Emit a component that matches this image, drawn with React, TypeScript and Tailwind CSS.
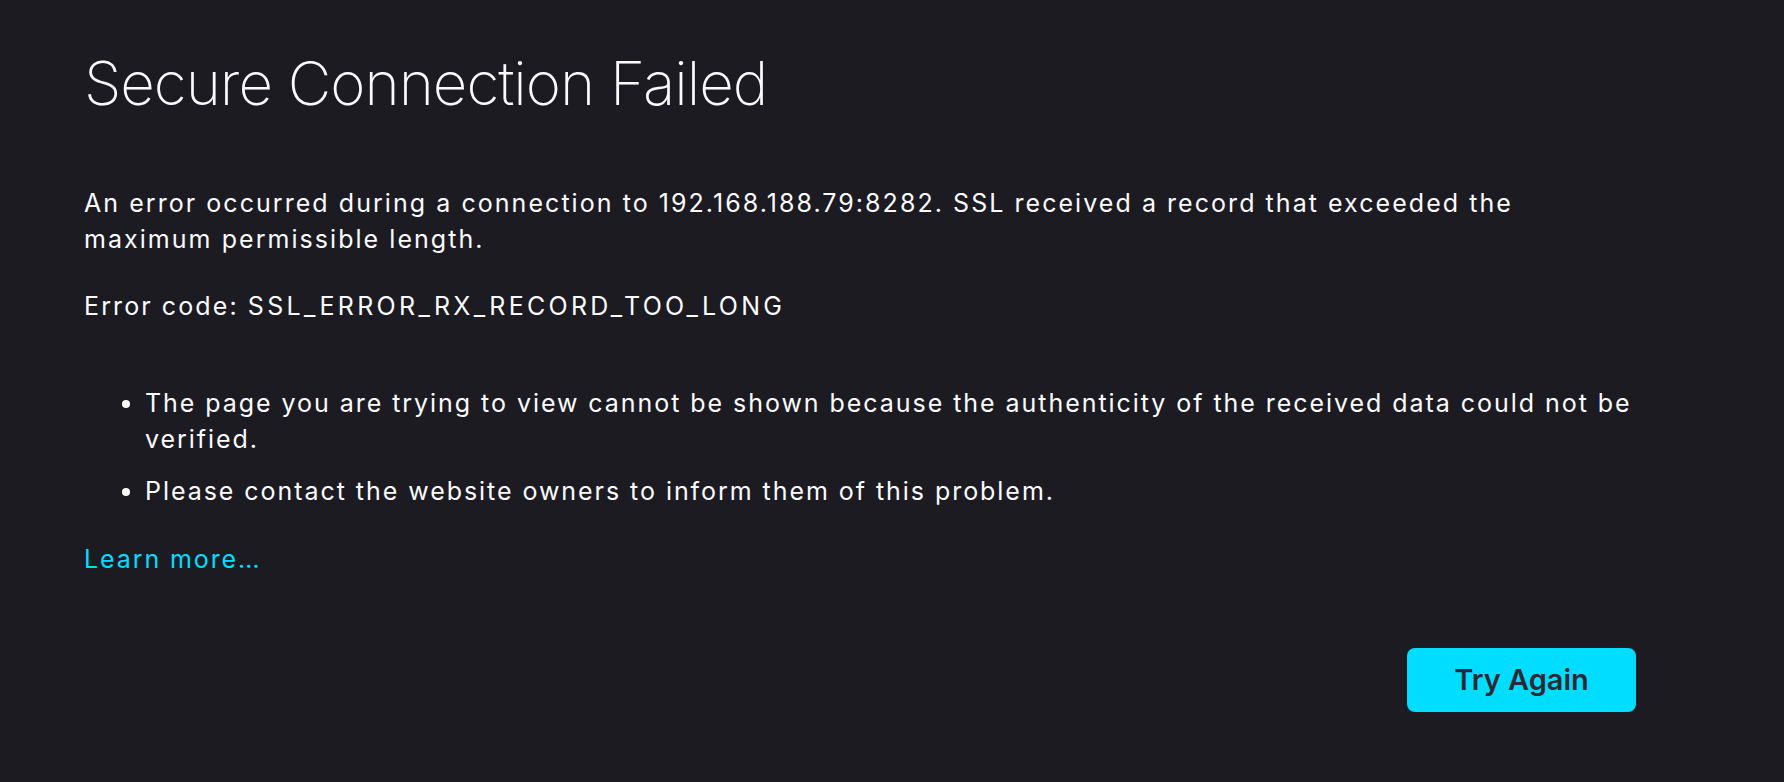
import React from "react";

export default function App() {
  return (
    <div
      className="min-h-screen w-full bg-[#1c1b22] text-[#fbfbfe] pl-[84px] pt-[47px]"
      style={{ fontFamily: "Inter, 'Noto Sans', sans-serif" }}
    >
      <div className="w-[1552px] flex flex-col">
        <h1 className="text-[60px] leading-[72px] font-extralight tracking-[-1px]">
          Secure Connection Failed
        </h1>

        <p className="mt-[66px] text-[25px] leading-[36px] tracking-[2.05px]">
          An error occurred during a connection to 192.168.188.79:8282. SSL received a record that exceeded the
          <br />
          maximum permissible length.
        </p>

        <p className="mt-[31px] text-[25px] leading-[36px] tracking-[2.1px]">
          Error code: <span className="tracking-[3.3px]">SSL_ERROR_RX_RECORD_TOO_LONG</span>
        </p>

        <ul className="mt-[61px] list-disc pl-[61px] text-[25px] leading-[36px] tracking-[1.95px] flex flex-col gap-[16px]">
          <li>
            The page you are trying to view cannot be shown because the authenticity of the received data could not be
            <br />
            verified.
          </li>
          <li>Please contact the website owners to inform them of this problem.</li>
        </ul>

        <div className="mt-[32px]">
          <a href="#" className="text-[25px] leading-[36px] tracking-[1.9px] text-[#00ddff]">
            Learn more…
          </a>
        </div>

        <div className="mt-[71px] flex justify-end">
          <button className="w-[229px] h-[64px] rounded-[8px] bg-[#00ddff] text-[#2b2a33] text-[29px] font-semibold">
            Try Again
          </button>
        </div>
      </div>
    </div>
  );
}
